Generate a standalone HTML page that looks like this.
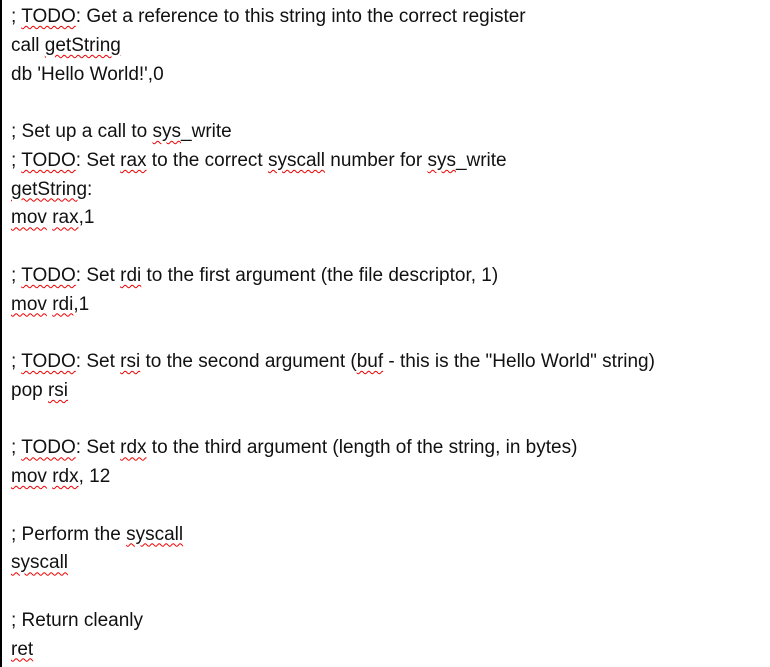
<!DOCTYPE html>
<html><head><style>
html,body{margin:0;padding:0;background:#fff;}
body{width:770px;height:667px;overflow:hidden;border-left:2px solid #000;box-sizing:border-box;}
.c{padding:3px 0 0 9px;font-family:"Liberation Sans",sans-serif;font-size:19px;line-height:28.75px;color:#111;white-space:pre;}
u{text-decoration:underline wavy #e00;text-decoration-thickness:1px;text-underline-offset:3px;}
</style></head><body><div class="c">; <u>TODO</u>: Get a reference to this string into the correct register
call <u>getString</u>
db 'Hello World!',0

; Set up a call to <u>sys</u>_write
; <u>TODO</u>: Set <u>rax</u> to the correct <u>syscall</u> number for <u>sys</u>_write
<u>getString</u>:
<u>mov</u> <u>rax</u>,1

; <u>TODO</u>: Set <u>rdi</u> to the first argument (the file descriptor, 1)
<u>mov</u> <u>rdi</u>,1

; <u>TODO</u>: Set <u>rsi</u> to the second argument (<u>buf</u> - this is the "Hello World" string)
pop <u>rsi</u>

; <u>TODO</u>: Set <u>rdx</u> to the third argument (length of the string, in bytes)
<u>mov</u> <u>rdx</u>, 12

; Perform the <u>syscall</u>
<u>syscall</u>

; Return cleanly
<u>ret</u></div></body></html>
